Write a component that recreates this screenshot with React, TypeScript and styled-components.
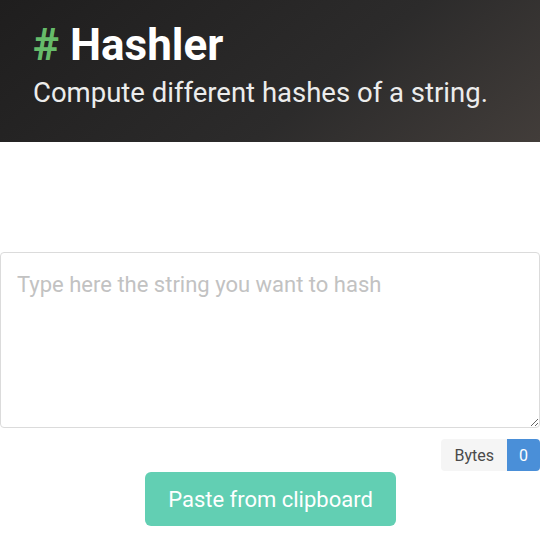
import React from "react";
import styled, { createGlobalStyle } from "styled-components";

const Global = createGlobalStyle`
  html, body { margin: 0; padding: 0; background: #fff; }
  body { font-family: Roboto, "Noto Sans", Arial, sans-serif; }
  * { box-sizing: border-box; }
`;

const Hero = styled.header`
  height: 142px;
  padding: 21px 33px 0;
  background: linear-gradient(141deg, #1f1e1e 0%, #2c2b2b 60%, #423d3a 100%);
  color: #fff;
`;

const Title = styled.h1`
  margin: 0;
  font-size: 44px;
  font-weight: 700;
  line-height: 48px;
  color: #fff;
`;

const Hash = styled.span`
  color: #66bb6a;
`;

const Subtitle = styled.p`
  margin: 6px 0 0;
  font-size: 27.5px;
  font-weight: 400;
  line-height: 36px;
  color: #ececec;
`;

const Main = styled.main`
  padding-top: 110px;
  display: flex;
  flex-direction: column;
`;

const Area = styled.textarea`
  display: block;
  width: 540px;
  height: 176px;
  margin: 0;
  padding: 17px 16px;
  border: 1px solid #dbdbdb;
  border-radius: 4px;
  font-family: Roboto, Arial, sans-serif;
  font-size: 22px;
  line-height: 30px;
  color: #363636;
  resize: vertical;
  outline: none;
  &::placeholder { color: #c2c2c2; }
`;

const TagRow = styled.div`
  display: flex;
  justify-content: flex-end;
  margin-top: 11px;
`;

const Tag = styled.span<{ $blue?: boolean }>`
  display: inline-flex;
  align-items: center;
  height: 32px;
  padding: ${(p) => (p.$blue ? "0 12px" : "0 13px 0 13px")};
  font-size: 16px;
  background: ${(p) => (p.$blue ? "#4a8fd8" : "#f5f5f5")};
  color: ${(p) => (p.$blue ? "#fff" : "#4a4a4a")};
  border-radius: ${(p) => (p.$blue ? "0 4px 4px 0" : "4px 0 0 4px")};
`;

const ButtonRow = styled.div`
  display: flex;
  justify-content: center;
  padding-left: 1px;
  margin-top: 1px;
`;

const Button = styled.button`
  width: 251px;
  height: 54px;
  border: none;
  border-radius: 6px;
  background: #62cfb3;
  color: #fff;
  font-family: Roboto, Arial, sans-serif;
  font-size: 22px;
  cursor: pointer;
`;

export default function App() {
  return (
    <>
      <Global />
      <Hero>
        <Title>
          <Hash>#</Hash> Hashler
        </Title>
        <Subtitle>Compute different hashes of a string.</Subtitle>
      </Hero>
      <Main>
        <Area placeholder="Type here the string you want to hash" />
        <TagRow>
          <Tag>Bytes</Tag>
          <Tag $blue>0</Tag>
        </TagRow>
        <ButtonRow>
          <Button>Paste from clipboard</Button>
        </ButtonRow>
      </Main>
    </>
  );
}
